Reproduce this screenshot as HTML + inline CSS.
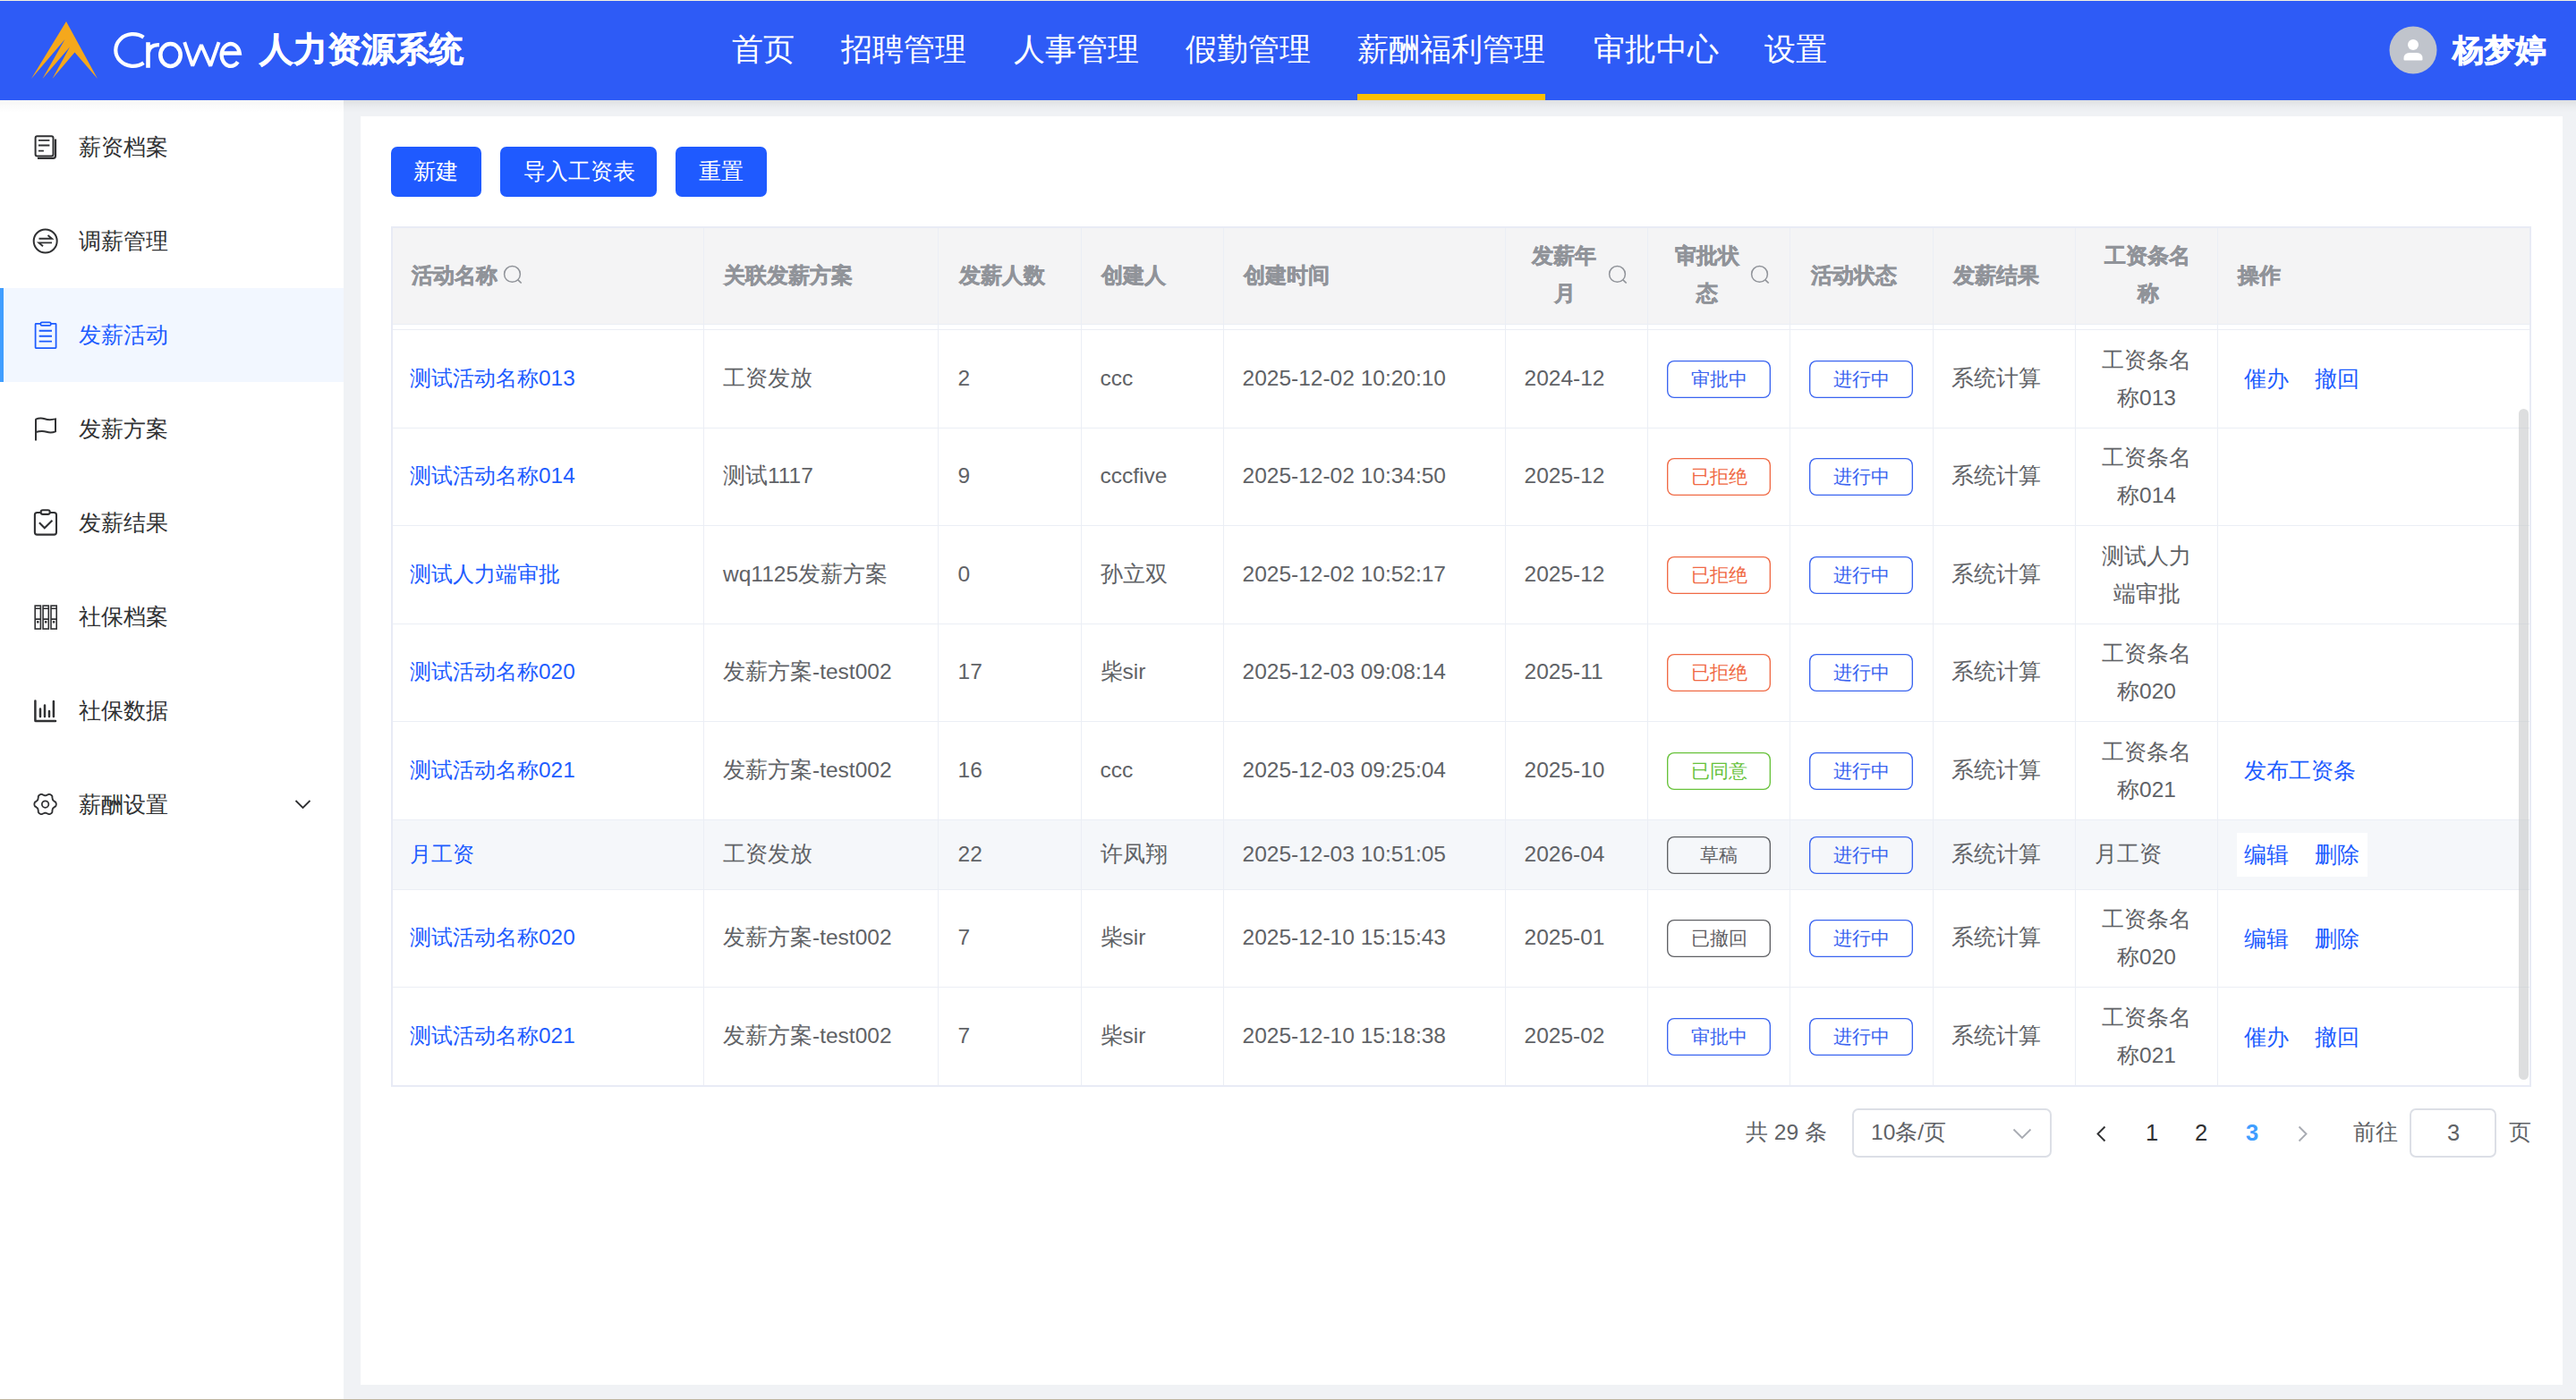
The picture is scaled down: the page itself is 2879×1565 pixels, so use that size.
<!DOCTYPE html><html><head><meta charset="utf-8"><style>
html,body{margin:0;padding:0;overflow:hidden;}
body{width:2879px;height:1565px;position:relative;overflow:hidden;background:#f0f2f5;font-family:"Liberation Sans", sans-serif;}
.r{position:absolute;}
.t{position:absolute;white-space:nowrap;}
.tag{position:absolute;box-sizing:border-box;width:116px;height:42px;border:0;box-shadow:inset 0 0 0 1.35px currentColor;border-radius:8px;font-size:20.5px;line-height:42px;text-align:center;background:transparent;white-space:nowrap;}
</style></head><body><div class="r" style="left:0px;top:0px;width:2879px;height:1px;background:#f3f1df;"></div>
<div class="r" style="left:0px;top:1px;width:2879px;height:111px;background:#2e5bf6;"></div>
<div class="r" style="left:384px;top:112px;width:2495px;height:14px;background:linear-gradient(rgba(0,0,0,0.075),rgba(0,0,0,0.02) 60%,rgba(0,0,0,0));"></div>
<div class="r" style="left:0px;top:112px;width:384px;height:14px;background:linear-gradient(rgba(0,0,0,0.035),rgba(0,0,0,0));z-index:2"></div>
<svg class="r" style="left:0;top:0" width="300" height="112" viewBox="0 0 300 112"><polygon fill="#f5a81c" points="74,24 109,88 83.5,58.5 58.5,88 78,52.5 47.5,88 72.5,44 35,88"/><g fill="none" stroke="#fff" stroke-width="4.2"><path d="M160.5 41.8 A19.4 17.9 0 1 0 160.5 70.2"/><path d="M165.5 47.2 V75.8" stroke-width="4.6"/><path d="M165.8 58.5 Q167.5 49.6 178 50.2" stroke-width="4.4"/><ellipse cx="190.5" cy="61.5" rx="11.2" ry="12.5" stroke-width="4.6"/><path d="M206.2 47.2 L215.2 73.6 L225 50.2 L235.2 73.6 L244.6 47.2" stroke-width="4" stroke-linejoin="bevel"/><path d="M248 59.50 H267.77 A10.1 12.4 0 1 0 265.76 69.13" stroke-width="4.4"/></g></svg>
<div class="t" style="left:290px;top:37px;font-size:37.5px;line-height:37.5px;color:#fff;font-weight:700;-webkit-text-stroke:0.6px #fff;">人力资源系统</div>
<div class="t" style="left:818px;top:37px;font-size:35.2px;line-height:35.2px;color:#fff;font-weight:400;">首页</div>
<div class="t" style="left:940px;top:37px;font-size:35.2px;line-height:35.2px;color:#fff;font-weight:400;">招聘管理</div>
<div class="t" style="left:1133px;top:37px;font-size:35.2px;line-height:35.2px;color:#fff;font-weight:400;">人事管理</div>
<div class="t" style="left:1325px;top:37px;font-size:35.2px;line-height:35.2px;color:#fff;font-weight:400;">假勤管理</div>
<div class="t" style="left:1517px;top:37px;font-size:35.2px;line-height:35.2px;color:#fff;font-weight:400;">薪酬福利管理</div>
<div class="t" style="left:1781px;top:37px;font-size:35.2px;line-height:35.2px;color:#fff;font-weight:400;">审批中心</div>
<div class="t" style="left:1972px;top:37px;font-size:35.2px;line-height:35.2px;color:#fff;font-weight:400;">设置</div>
<div class="r" style="left:1517px;top:105px;width:210px;height:7px;background:#fcbf04;"></div>
<svg class="r" style="left:2670px;top:29px" width="54" height="54" viewBox="0 0 54 54"><circle cx="27" cy="27" r="26.5" fill="#c0c4cc"/><circle cx="27" cy="21" r="6" fill="#fff"/><path d="M16.5 36.5 Q16.5 30 23 30 L31 30 Q37.5 30 37.5 36.5 L37.5 37.5 Q37.5 38.5 36.5 38.5 L17.5 38.5 Q16.5 38.5 16.5 37.5 Z" fill="#fff"/></svg>
<div class="t" style="left:2741px;top:39px;font-size:34.5px;line-height:34.5px;color:#fff;font-weight:700;-webkit-text-stroke:0.6px #fff;">杨梦婷</div>
<div class="r" style="left:0px;top:112px;width:384px;height:1453px;background:#fff;"></div>
<div class="r" style="left:384px;top:112px;width:2495px;height:1453px;background:#f0f2f5;z-index:-1"></div>
<div class="r" style="left:0px;top:322px;width:384px;height:105px;background:#f2f7ff;"></div>
<div class="r" style="left:0px;top:322px;width:4px;height:105px;background:#409eff;"></div>
<div class="t" style="left:87.5px;top:153px;font-size:24.6px;line-height:24.6px;color:#303133;font-weight:400;">薪资档案</div>
<div class="t" style="left:87.5px;top:258px;font-size:24.6px;line-height:24.6px;color:#303133;font-weight:400;">调薪管理</div>
<div class="t" style="left:87.5px;top:363px;font-size:24.6px;line-height:24.6px;color:#1d5cff;font-weight:400;">发薪活动</div>
<div class="t" style="left:87.5px;top:468px;font-size:24.6px;line-height:24.6px;color:#303133;font-weight:400;">发薪方案</div>
<div class="t" style="left:87.5px;top:573px;font-size:24.6px;line-height:24.6px;color:#303133;font-weight:400;">发薪结果</div>
<div class="t" style="left:87.5px;top:678px;font-size:24.6px;line-height:24.6px;color:#303133;font-weight:400;">社保档案</div>
<div class="t" style="left:87.5px;top:783px;font-size:24.6px;line-height:24.6px;color:#303133;font-weight:400;">社保数据</div>
<div class="t" style="left:87.5px;top:888px;font-size:24.6px;line-height:24.6px;color:#303133;font-weight:400;">薪酬设置</div>
<svg class="r" style="left:32px;top:144px" width="40" height="40" viewBox="0 0 40 40" fill="none" stroke="#303133" stroke-width="2"><rect x="7.6" y="8.2" width="19.9" height="22.3" rx="2"/><path d="M10 32.8 L27.5 32.8 Q30 32.8 30 30.3 L30 11.5" stroke-width="2.2"/><path d="M11 12.9 H23.4 M11 18.5 H23.4 M11 24.6 H16.9" stroke-width="1.9"/></svg>
<svg class="r" style="left:32px;top:249px" width="40" height="40" viewBox="0 0 40 40" fill="none" stroke="#303133" stroke-width="2"><circle cx="18.7" cy="20.5" r="13"/><path d="M11.5 17.8 H26 L21.5 14" stroke-width="1.9"/><path d="M26 22.4 H11.5 L16 26.2" stroke-width="1.9"/></svg>
<svg class="r" style="left:32px;top:354px" width="40" height="40" viewBox="0 0 40 40" fill="none" stroke="#1d5cff" stroke-width="1.75"><rect x="7.6" y="7.8" width="23" height="27.3" rx="0.6"/><rect x="13.4" y="6.4" width="11.4" height="3.4" rx="1.4" fill="#f2f7ff"/><path d="M11.7 15.8 H26 M11.7 21.7 H26 M11.7 27.6 H26" stroke-width="1.9"/></svg>
<svg class="r" style="left:32px;top:459px" width="40" height="40" viewBox="0 0 40 40" fill="none" stroke="#303133" stroke-width="2"><path d="M8 33.5 V9.2"/><path d="M8 9.6 Q13 7.4 18 9.2 T30 9.4 V23.4 Q25 25.4 20 23.8 T8 24"/></svg>
<svg class="r" style="left:32px;top:560px" width="40" height="40" viewBox="0 0 40 40" fill="none" stroke="#303133" stroke-width="2.1"><path d="M13.6 13 H9.5 Q6.9 13 6.9 15.6 V35 Q6.9 37.6 9.5 37.6 H28.4 Q31 37.6 31 35 V15.6 Q31 13 28.4 13 H24"/><rect x="13.6" y="10.3" width="10.2" height="4.6" rx="2.3"/><path d="M11.9 24.3 L17.8 30.2 L26.4 21.7"/></svg>
<svg class="r" style="left:32px;top:670px" width="40" height="40" viewBox="0 0 40 40" fill="none" stroke="#303133" stroke-width="1.6"><rect x="7.2" y="7.1" width="6.2" height="25.9"/><path d="M7.2 10.3 H13.4 M7.2 22.1 H13.4"/><circle cx="10.3" cy="25.3" r="0.6" fill="#303133"/><rect x="16.1" y="7.1" width="6.2" height="25.9"/><path d="M16.1 10.3 H22.3 M16.1 22.1 H22.3"/><circle cx="19.200000000000003" cy="25.3" r="0.6" fill="#303133"/><rect x="25" y="7.1" width="6.2" height="25.9"/><path d="M25 10.3 H31.2 M25 22.1 H31.2"/><circle cx="28.1" cy="25.3" r="0.6" fill="#303133"/></svg>
<svg class="r" style="left:32px;top:775px" width="40" height="40" viewBox="0 0 40 40" fill="none" stroke="#303133" stroke-width="2.5" stroke-linecap="round"><path d="M7.4 8.4 V30.4 Q7.4 31 8 31 H30"/><path d="M13 17.4 V26 M18 13.4 V26 M23 19.9 V26 M27.9 9.1 V26"/></svg>
<svg class="r" style="left:32px;top:879px" width="40" height="40" viewBox="0 0 40 40" fill="none" stroke="#303133" stroke-width="1.85"><polyline points="30.80,20.00 30.76,20.64 30.62,21.26 30.39,21.87 30.03,22.43 29.18,22.83 28.76,23.30 28.24,23.70 27.74,24.07 27.31,24.44 27.00,24.85 26.80,25.33 26.69,25.88 26.62,26.50 26.54,27.15 26.34,27.74 26.42,28.69 26.11,29.27 25.70,29.78 25.23,30.21 24.70,30.57 24.13,30.85 23.52,31.04 22.88,31.14 22.21,31.11 21.43,30.58 20.82,30.45 20.21,30.20 19.65,29.95 19.11,29.77 18.60,29.70 18.09,29.77 17.55,29.95 16.99,30.20 16.38,30.45 15.77,30.58 14.99,31.11 14.32,31.14 13.68,31.04 13.07,30.85 12.50,30.57 11.97,30.21 11.50,29.78 11.09,29.27 10.78,28.69 10.86,27.74 10.66,27.15 10.58,26.50 10.51,25.88 10.40,25.33 10.20,24.85 9.89,24.44 9.46,24.07 8.96,23.70 8.44,23.30 8.02,22.83 7.17,22.43 6.81,21.87 6.58,21.26 6.44,20.64 6.40,20.00 6.44,19.36 6.58,18.74 6.81,18.13 7.17,17.57 8.02,17.17 8.44,16.70 8.96,16.30 9.46,15.93 9.89,15.56 10.20,15.15 10.40,14.67 10.51,14.12 10.58,13.50 10.66,12.85 10.86,12.26 10.78,11.31 11.09,10.73 11.50,10.22 11.97,9.79 12.50,9.43 13.07,9.15 13.68,8.96 14.32,8.86 14.99,8.89 15.77,9.42 16.38,9.55 16.99,9.80 17.55,10.05 18.09,10.23 18.60,10.30 19.11,10.23 19.65,10.05 20.21,9.80 20.82,9.55 21.43,9.42 22.21,8.89 22.88,8.86 23.52,8.96 24.13,9.15 24.70,9.43 25.23,9.79 25.70,10.22 26.11,10.73 26.42,11.31 26.34,12.26 26.54,12.85 26.62,13.50 26.69,14.12 26.80,14.67 27.00,15.15 27.31,15.56 27.74,15.93 28.24,16.30 28.76,16.70 29.18,17.17 30.03,17.57 30.39,18.13 30.62,18.74 30.76,19.36 30.80,20.00"/><circle cx="18.6" cy="20" r="3.75" stroke-width="1.75"/></svg>
<svg class="r" style="left:328px;top:892px" width="22" height="14" viewBox="0 0 22 14" fill="none" stroke="#303133" stroke-width="1.8"><path d="M2.5 3 L10.5 11 L18.5 3"/></svg>
<div class="r" style="left:403px;top:130px;width:2461px;height:1418px;background:#fff;"></div>
<div class="r" style="left:437px;top:164px;width:101px;height:56px;background:#1f5aff;border-radius:7px"></div>
<div class="t" style="left:462px;top:180px;font-size:24.5px;line-height:24.5px;color:#fff;font-weight:400;">新建</div>
<div class="r" style="left:559px;top:164px;width:175px;height:56px;background:#1f5aff;border-radius:7px"></div>
<div class="t" style="left:585px;top:180px;font-size:24.5px;line-height:24.5px;color:#fff;font-weight:400;">导入工资表</div>
<div class="r" style="left:755px;top:164px;width:102px;height:56px;background:#1f5aff;border-radius:7px"></div>
<div class="t" style="left:781px;top:180px;font-size:24.5px;line-height:24.5px;color:#fff;font-weight:400;">重置</div>
<div class="r" style="left:437px;top:255px;width:2391px;height:107px;background:#f4f4f5;"></div>
<div class="r" style="left:437px;top:916px;width:2390px;height:78px;background:#f5f7fa;"></div>
<div class="r" style="left:437px;top:362px;width:2390px;height:1px;background:#ebeef5;"></div>
<div class="r" style="left:437px;top:368px;width:2390px;height:1px;background:#ebeef5;"></div>
<div class="r" style="left:437px;top:478px;width:2390px;height:1px;background:#ebeef5;"></div>
<div class="r" style="left:437px;top:587px;width:2390px;height:1px;background:#ebeef5;"></div>
<div class="r" style="left:437px;top:697px;width:2390px;height:1px;background:#ebeef5;"></div>
<div class="r" style="left:437px;top:806px;width:2390px;height:1px;background:#ebeef5;"></div>
<div class="r" style="left:437px;top:916px;width:2390px;height:1px;background:#ebeef5;"></div>
<div class="r" style="left:437px;top:994px;width:2390px;height:1px;background:#ebeef5;"></div>
<div class="r" style="left:437px;top:1103px;width:2390px;height:1px;background:#ebeef5;"></div>
<div class="r" style="left:786px;top:253px;width:1px;height:961px;background:#ebeef5;"></div>
<div class="r" style="left:1048px;top:253px;width:1px;height:961px;background:#ebeef5;"></div>
<div class="r" style="left:1208px;top:253px;width:1px;height:961px;background:#ebeef5;"></div>
<div class="r" style="left:1367px;top:253px;width:1px;height:961px;background:#ebeef5;"></div>
<div class="r" style="left:1682px;top:253px;width:1px;height:961px;background:#ebeef5;"></div>
<div class="r" style="left:1841px;top:253px;width:1px;height:961px;background:#ebeef5;"></div>
<div class="r" style="left:2000px;top:253px;width:1px;height:961px;background:#ebeef5;"></div>
<div class="r" style="left:2160px;top:253px;width:1px;height:961px;background:#ebeef5;"></div>
<div class="r" style="left:2319px;top:253px;width:1px;height:961px;background:#ebeef5;"></div>
<div class="r" style="left:2478px;top:253px;width:1px;height:961px;background:#ebeef5;"></div>
<div class="t" style="left:459.5px;top:295.5px;font-size:24px;line-height:24px;color:#909399;font-weight:700;-webkit-text-stroke:0.55px #909399;">活动名称</div>
<svg class="r" style="left:562px;top:296px" width="24" height="24" viewBox="0 0 24 24" fill="none" stroke="#909399" stroke-width="1.5"><circle cx="10.5" cy="10.4" r="8.9"/><path d="M16.9 16.8 L20.7 20.5" stroke-width="1.7"/></svg>
<div class="t" style="left:808.5px;top:295.5px;font-size:24px;line-height:24px;color:#909399;font-weight:700;-webkit-text-stroke:0.55px #909399;">关联发薪方案</div>
<div class="t" style="left:1071.5px;top:295.5px;font-size:24px;line-height:24px;color:#909399;font-weight:700;-webkit-text-stroke:0.55px #909399;">发薪人数</div>
<div class="t" style="left:1230.5px;top:295.5px;font-size:24px;line-height:24px;color:#909399;font-weight:700;-webkit-text-stroke:0.55px #909399;">创建人</div>
<div class="t" style="left:1389.5px;top:295.5px;font-size:24px;line-height:24px;color:#909399;font-weight:700;-webkit-text-stroke:0.55px #909399;">创建时间</div>
<div class="t" style="left:1711.5px;top:274px;font-size:24px;line-height:24px;color:#909399;font-weight:700;-webkit-text-stroke:0.55px #909399;">发薪年</div>
<div class="t" style="left:1736.5px;top:316px;font-size:24px;line-height:24px;color:#909399;font-weight:700;-webkit-text-stroke:0.55px #909399;">月</div>
<svg class="r" style="left:1797px;top:296px" width="24" height="24" viewBox="0 0 24 24" fill="none" stroke="#909399" stroke-width="1.5"><circle cx="10.5" cy="10.4" r="8.9"/><path d="M16.9 16.8 L20.7 20.5" stroke-width="1.7"/></svg>
<div class="t" style="left:1871.5px;top:274px;font-size:24px;line-height:24px;color:#909399;font-weight:700;-webkit-text-stroke:0.55px #909399;">审批状</div>
<div class="t" style="left:1895.5px;top:316px;font-size:24px;line-height:24px;color:#909399;font-weight:700;-webkit-text-stroke:0.55px #909399;">态</div>
<svg class="r" style="left:1956px;top:296px" width="24" height="24" viewBox="0 0 24 24" fill="none" stroke="#909399" stroke-width="1.5"><circle cx="10.5" cy="10.4" r="8.9"/><path d="M16.9 16.8 L20.7 20.5" stroke-width="1.7"/></svg>
<div class="t" style="left:2023.5px;top:295.5px;font-size:24px;line-height:24px;color:#909399;font-weight:700;-webkit-text-stroke:0.55px #909399;">活动状态</div>
<div class="t" style="left:2182.5px;top:295.5px;font-size:24px;line-height:24px;color:#909399;font-weight:700;-webkit-text-stroke:0.55px #909399;">发薪结果</div>
<div class="t" style="left:2351.5px;top:274px;font-size:24px;line-height:24px;color:#909399;font-weight:700;-webkit-text-stroke:0.55px #909399;">工资条名</div>
<div class="t" style="left:2388.5px;top:316px;font-size:24px;line-height:24px;color:#909399;font-weight:700;-webkit-text-stroke:0.55px #909399;">称</div>
<div class="t" style="left:2500.5px;top:295.5px;font-size:24px;line-height:24px;color:#909399;font-weight:700;-webkit-text-stroke:0.55px #909399;">操作</div>
<div class="t" style="left:458px;top:410.75px;font-size:24.4px;line-height:24.4px;color:#1d5cff;font-weight:400;">测试活动名称013</div>
<div class="t" style="left:808px;top:410.75px;font-size:24.5px;line-height:24.5px;color:#606266;font-weight:400;">工资发放</div>
<div class="t" style="left:1070.5px;top:410.75px;font-size:24.5px;line-height:24.5px;color:#606266;font-weight:400;">2</div>
<div class="t" style="left:1229.5px;top:410.75px;font-size:24.5px;line-height:24.5px;color:#606266;font-weight:400;">ccc</div>
<div class="t" style="left:1388.5px;top:410.75px;font-size:24.5px;line-height:24.5px;color:#606266;font-weight:400;">2025-12-02 10:20:10</div>
<div class="t" style="left:1703.5px;top:410.75px;font-size:24.5px;line-height:24.5px;color:#606266;font-weight:400;">2024-12</div>
<div class="tag" style="left:1863px;top:402.5px;border-color:#3a64f0;color:#3a64f0">审批中</div>
<div class="tag" style="left:2022px;top:402.5px;border-color:#3a64f0;color:#3a64f0">进行中</div>
<div class="t" style="left:2181px;top:410.75px;font-size:24.5px;line-height:24.5px;color:#606266;font-weight:400;">系统计算</div>
<div class="t" style="left:2320px;width:158px;text-align:center;top:381.5px;font-size:24.5px;line-height:42px;color:#606266">工资条名<br>称013</div>
<div class="t" style="left:2508px;top:412.25px;font-size:24.5px;line-height:24.5px;color:#1d5cff;font-weight:400;">催办</div>
<div class="t" style="left:2587px;top:412.25px;font-size:24.5px;line-height:24.5px;color:#1d5cff;font-weight:400;">撤回</div>
<div class="t" style="left:458px;top:520.25px;font-size:24.4px;line-height:24.4px;color:#1d5cff;font-weight:400;">测试活动名称014</div>
<div class="t" style="left:808px;top:520.25px;font-size:24.5px;line-height:24.5px;color:#606266;font-weight:400;">测试1117</div>
<div class="t" style="left:1070.5px;top:520.25px;font-size:24.5px;line-height:24.5px;color:#606266;font-weight:400;">9</div>
<div class="t" style="left:1229.5px;top:520.25px;font-size:24.5px;line-height:24.5px;color:#606266;font-weight:400;">cccfive</div>
<div class="t" style="left:1388.5px;top:520.25px;font-size:24.5px;line-height:24.5px;color:#606266;font-weight:400;">2025-12-02 10:34:50</div>
<div class="t" style="left:1703.5px;top:520.25px;font-size:24.5px;line-height:24.5px;color:#606266;font-weight:400;">2025-12</div>
<div class="tag" style="left:1863px;top:512.0px;border-color:#f06a45;color:#f06a45">已拒绝</div>
<div class="tag" style="left:2022px;top:512.0px;border-color:#3a64f0;color:#3a64f0">进行中</div>
<div class="t" style="left:2181px;top:520.25px;font-size:24.5px;line-height:24.5px;color:#606266;font-weight:400;">系统计算</div>
<div class="t" style="left:2320px;width:158px;text-align:center;top:491.0px;font-size:24.5px;line-height:42px;color:#606266">工资条名<br>称014</div>
<div class="t" style="left:458px;top:629.75px;font-size:24.4px;line-height:24.4px;color:#1d5cff;font-weight:400;">测试人力端审批</div>
<div class="t" style="left:808px;top:629.75px;font-size:24.5px;line-height:24.5px;color:#606266;font-weight:400;">wq1125发薪方案</div>
<div class="t" style="left:1070.5px;top:629.75px;font-size:24.5px;line-height:24.5px;color:#606266;font-weight:400;">0</div>
<div class="t" style="left:1229.5px;top:629.75px;font-size:24.5px;line-height:24.5px;color:#606266;font-weight:400;">孙立双</div>
<div class="t" style="left:1388.5px;top:629.75px;font-size:24.5px;line-height:24.5px;color:#606266;font-weight:400;">2025-12-02 10:52:17</div>
<div class="t" style="left:1703.5px;top:629.75px;font-size:24.5px;line-height:24.5px;color:#606266;font-weight:400;">2025-12</div>
<div class="tag" style="left:1863px;top:621.5px;border-color:#f06a45;color:#f06a45">已拒绝</div>
<div class="tag" style="left:2022px;top:621.5px;border-color:#3a64f0;color:#3a64f0">进行中</div>
<div class="t" style="left:2181px;top:629.75px;font-size:24.5px;line-height:24.5px;color:#606266;font-weight:400;">系统计算</div>
<div class="t" style="left:2320px;width:158px;text-align:center;top:600.5px;font-size:24.5px;line-height:42px;color:#606266">测试人力<br>端审批</div>
<div class="t" style="left:458px;top:739.25px;font-size:24.4px;line-height:24.4px;color:#1d5cff;font-weight:400;">测试活动名称020</div>
<div class="t" style="left:808px;top:739.25px;font-size:24.5px;line-height:24.5px;color:#606266;font-weight:400;">发薪方案-test002</div>
<div class="t" style="left:1070.5px;top:739.25px;font-size:24.5px;line-height:24.5px;color:#606266;font-weight:400;">17</div>
<div class="t" style="left:1229.5px;top:739.25px;font-size:24.5px;line-height:24.5px;color:#606266;font-weight:400;">柴sir</div>
<div class="t" style="left:1388.5px;top:739.25px;font-size:24.5px;line-height:24.5px;color:#606266;font-weight:400;">2025-12-03 09:08:14</div>
<div class="t" style="left:1703.5px;top:739.25px;font-size:24.5px;line-height:24.5px;color:#606266;font-weight:400;">2025-11</div>
<div class="tag" style="left:1863px;top:731.0px;border-color:#f06a45;color:#f06a45">已拒绝</div>
<div class="tag" style="left:2022px;top:731.0px;border-color:#3a64f0;color:#3a64f0">进行中</div>
<div class="t" style="left:2181px;top:739.25px;font-size:24.5px;line-height:24.5px;color:#606266;font-weight:400;">系统计算</div>
<div class="t" style="left:2320px;width:158px;text-align:center;top:710.0px;font-size:24.5px;line-height:42px;color:#606266">工资条名<br>称020</div>
<div class="t" style="left:458px;top:848.75px;font-size:24.4px;line-height:24.4px;color:#1d5cff;font-weight:400;">测试活动名称021</div>
<div class="t" style="left:808px;top:848.75px;font-size:24.5px;line-height:24.5px;color:#606266;font-weight:400;">发薪方案-test002</div>
<div class="t" style="left:1070.5px;top:848.75px;font-size:24.5px;line-height:24.5px;color:#606266;font-weight:400;">16</div>
<div class="t" style="left:1229.5px;top:848.75px;font-size:24.5px;line-height:24.5px;color:#606266;font-weight:400;">ccc</div>
<div class="t" style="left:1388.5px;top:848.75px;font-size:24.5px;line-height:24.5px;color:#606266;font-weight:400;">2025-12-03 09:25:04</div>
<div class="t" style="left:1703.5px;top:848.75px;font-size:24.5px;line-height:24.5px;color:#606266;font-weight:400;">2025-10</div>
<div class="tag" style="left:1863px;top:840.5px;border-color:#67c23a;color:#67c23a">已同意</div>
<div class="tag" style="left:2022px;top:840.5px;border-color:#3a64f0;color:#3a64f0">进行中</div>
<div class="t" style="left:2181px;top:848.75px;font-size:24.5px;line-height:24.5px;color:#606266;font-weight:400;">系统计算</div>
<div class="t" style="left:2320px;width:158px;text-align:center;top:819.5px;font-size:24.5px;line-height:42px;color:#606266">工资条名<br>称021</div>
<div class="t" style="left:2508px;top:850.25px;font-size:24.5px;line-height:24.5px;color:#1d5cff;font-weight:400;">发布工资条</div>
<div class="t" style="left:458px;top:942.75px;font-size:24.4px;line-height:24.4px;color:#1d5cff;font-weight:400;">月工资</div>
<div class="t" style="left:808px;top:942.75px;font-size:24.5px;line-height:24.5px;color:#606266;font-weight:400;">工资发放</div>
<div class="t" style="left:1070.5px;top:942.75px;font-size:24.5px;line-height:24.5px;color:#606266;font-weight:400;">22</div>
<div class="t" style="left:1229.5px;top:942.75px;font-size:24.5px;line-height:24.5px;color:#606266;font-weight:400;">许凤翔</div>
<div class="t" style="left:1388.5px;top:942.75px;font-size:24.5px;line-height:24.5px;color:#606266;font-weight:400;">2025-12-03 10:51:05</div>
<div class="t" style="left:1703.5px;top:942.75px;font-size:24.5px;line-height:24.5px;color:#606266;font-weight:400;">2026-04</div>
<div class="tag" style="left:1863px;top:934.5px;border-color:#5f6064;color:#5f6064">草稿</div>
<div class="tag" style="left:2022px;top:934.5px;border-color:#3a64f0;color:#3a64f0">进行中</div>
<div class="t" style="left:2181px;top:942.75px;font-size:24.5px;line-height:24.5px;color:#606266;font-weight:400;">系统计算</div>
<div class="t" style="left:2341px;top:942.75px;font-size:24.5px;line-height:24.5px;color:#606266;font-weight:400;">月工资</div>
<div class="r" style="left:2500px;top:931px;width:146px;height:49px;background:#fff;"></div>
<div class="t" style="left:2508px;top:944.25px;font-size:24.5px;line-height:24.5px;color:#1d5cff;font-weight:400;">编辑</div>
<div class="t" style="left:2587px;top:944.25px;font-size:24.5px;line-height:24.5px;color:#1d5cff;font-weight:400;">删除</div>
<div class="t" style="left:458px;top:1036.25px;font-size:24.4px;line-height:24.4px;color:#1d5cff;font-weight:400;">测试活动名称020</div>
<div class="t" style="left:808px;top:1036.25px;font-size:24.5px;line-height:24.5px;color:#606266;font-weight:400;">发薪方案-test002</div>
<div class="t" style="left:1070.5px;top:1036.25px;font-size:24.5px;line-height:24.5px;color:#606266;font-weight:400;">7</div>
<div class="t" style="left:1229.5px;top:1036.25px;font-size:24.5px;line-height:24.5px;color:#606266;font-weight:400;">柴sir</div>
<div class="t" style="left:1388.5px;top:1036.25px;font-size:24.5px;line-height:24.5px;color:#606266;font-weight:400;">2025-12-10 15:15:43</div>
<div class="t" style="left:1703.5px;top:1036.25px;font-size:24.5px;line-height:24.5px;color:#606266;font-weight:400;">2025-01</div>
<div class="tag" style="left:1863px;top:1028.0px;border-color:#5f6064;color:#5f6064">已撤回</div>
<div class="tag" style="left:2022px;top:1028.0px;border-color:#3a64f0;color:#3a64f0">进行中</div>
<div class="t" style="left:2181px;top:1036.25px;font-size:24.5px;line-height:24.5px;color:#606266;font-weight:400;">系统计算</div>
<div class="t" style="left:2320px;width:158px;text-align:center;top:1007.0px;font-size:24.5px;line-height:42px;color:#606266">工资条名<br>称020</div>
<div class="t" style="left:2508px;top:1037.75px;font-size:24.5px;line-height:24.5px;color:#1d5cff;font-weight:400;">编辑</div>
<div class="t" style="left:2587px;top:1037.75px;font-size:24.5px;line-height:24.5px;color:#1d5cff;font-weight:400;">删除</div>
<div class="t" style="left:458px;top:1146.25px;font-size:24.4px;line-height:24.4px;color:#1d5cff;font-weight:400;">测试活动名称021</div>
<div class="t" style="left:808px;top:1146.25px;font-size:24.5px;line-height:24.5px;color:#606266;font-weight:400;">发薪方案-test002</div>
<div class="t" style="left:1070.5px;top:1146.25px;font-size:24.5px;line-height:24.5px;color:#606266;font-weight:400;">7</div>
<div class="t" style="left:1229.5px;top:1146.25px;font-size:24.5px;line-height:24.5px;color:#606266;font-weight:400;">柴sir</div>
<div class="t" style="left:1388.5px;top:1146.25px;font-size:24.5px;line-height:24.5px;color:#606266;font-weight:400;">2025-12-10 15:18:38</div>
<div class="t" style="left:1703.5px;top:1146.25px;font-size:24.5px;line-height:24.5px;color:#606266;font-weight:400;">2025-02</div>
<div class="tag" style="left:1863px;top:1138.0px;border-color:#3a64f0;color:#3a64f0">审批中</div>
<div class="tag" style="left:2022px;top:1138.0px;border-color:#3a64f0;color:#3a64f0">进行中</div>
<div class="t" style="left:2181px;top:1146.25px;font-size:24.5px;line-height:24.5px;color:#606266;font-weight:400;">系统计算</div>
<div class="t" style="left:2320px;width:158px;text-align:center;top:1117.0px;font-size:24.5px;line-height:42px;color:#606266">工资条名<br>称021</div>
<div class="t" style="left:2508px;top:1147.75px;font-size:24.5px;line-height:24.5px;color:#1d5cff;font-weight:400;">催办</div>
<div class="t" style="left:2587px;top:1147.75px;font-size:24.5px;line-height:24.5px;color:#1d5cff;font-weight:400;">撤回</div>
<div class="r" style="left:437px;top:253px;width:2392px;height:2px;background:#e8ebf5;"></div>
<div class="r" style="left:437px;top:253px;width:2px;height:962px;background:#e8ebf5;"></div>
<div class="r" style="left:2827px;top:253px;width:2px;height:962px;background:#e8ebf5;"></div>
<div class="r" style="left:437px;top:1213px;width:2392px;height:2px;background:#e8ebf5;"></div>
<div class="r" style="left:2815px;top:457px;width:11px;height:750px;background:rgba(200,201,204,0.62);border-radius:5.5px;z-index:1"></div>
<div class="r" style="left:0px;top:1564px;width:2879px;height:1px;background:#bdb49f;"></div>
<div class="t" style="left:1951px;top:1254px;font-size:24.5px;line-height:24.5px;color:#606266;font-weight:400;">共 29 条</div>
<div class="r" style="left:2070px;top:1239px;width:219px;height:51px;border:2px solid #dcdfe6;border-radius:7px;box-sizing:content-box"></div>
<div class="t" style="left:2091px;top:1254px;font-size:24.5px;line-height:24.5px;color:#606266;font-weight:400;">10条/页</div>
<svg class="r" style="left:2248px;top:1259px" width="24" height="16" viewBox="0 0 24 16" fill="none" stroke="#a8abb2" stroke-width="1.8"><path d="M2.5 3.5 L12 13 L21.5 3.5"/></svg>
<svg class="r" style="left:2340px;top:1256px" width="16" height="22" viewBox="0 0 16 22" fill="none" stroke="#303133" stroke-width="1.9"><path d="M12.5 3.5 L4.5 11.5 L12.5 19.5"/></svg>
<div class="t" style="left:2398px;top:1254px;font-size:25.5px;line-height:25.5px;color:#303133;font-weight:400;">1</div>
<div class="t" style="left:2453px;top:1254px;font-size:25.5px;line-height:25.5px;color:#303133;font-weight:400;">2</div>
<div class="t" style="left:2510px;top:1254px;font-size:25.5px;line-height:25.5px;color:#409eff;font-weight:700;">3</div>
<svg class="r" style="left:2566px;top:1256px" width="16" height="22" viewBox="0 0 16 22" fill="none" stroke="#a8abb2" stroke-width="1.9"><path d="M3.5 3.5 L11.5 11.5 L3.5 19.5"/></svg>
<div class="t" style="left:2630px;top:1254px;font-size:24.5px;line-height:24.5px;color:#606266;font-weight:400;">前往</div>
<div class="r" style="left:2693px;top:1239px;width:93px;height:51px;border:2px solid #dcdfe6;border-radius:7px;box-sizing:content-box"></div>
<div class="t" style="left:2735px;top:1254px;font-size:25.5px;line-height:25.5px;color:#606266;font-weight:400;">3</div>
<div class="t" style="left:2804px;top:1254px;font-size:24.5px;line-height:24.5px;color:#606266;font-weight:400;">页</div></body></html>
